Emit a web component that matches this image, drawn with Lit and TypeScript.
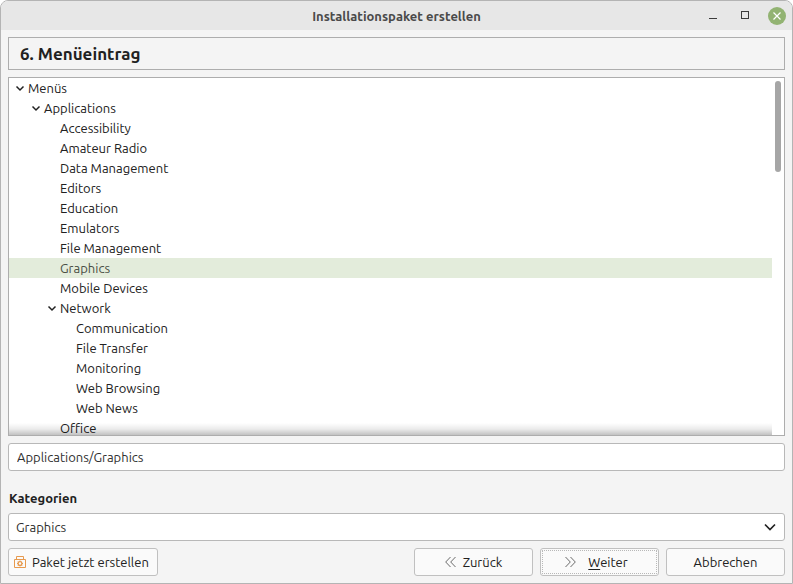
import { LitElement, html, css, svg, nothing } from "lit";
import { customElement, state } from "lit/decorators.js";
import { classMap } from "lit/directives/class-map.js";

interface MenuRow {
  label: string;
  level: number;
  open?: boolean;
}

const ROWS: MenuRow[] = [
  { label: "Menüs", level: 1, open: true },
  { label: "Applications", level: 2, open: true },
  { label: "Accessibility", level: 3 },
  { label: "Amateur Radio", level: 3 },
  { label: "Data Management", level: 3 },
  { label: "Editors", level: 3 },
  { label: "Education", level: 3 },
  { label: "Emulators", level: 3 },
  { label: "File Management", level: 3 },
  { label: "Graphics", level: 3 },
  { label: "Mobile Devices", level: 3 },
  { label: "Network", level: 3, open: true },
  { label: "Communication", level: 4 },
  { label: "File Transfer", level: 4 },
  { label: "Monitoring", level: 4 },
  { label: "Web Browsing", level: 4 },
  { label: "Web News", level: 4 },
  { label: "Office", level: 3 },
];

const chevron = svg`<path d="M1.5 3.5 L5 7 L8.5 3.5" fill="none" stroke="currentColor" stroke-width="1.5"/>`;

@customElement("app-root")
export class AppRoot extends LitElement {
  @state() private selected = "Graphics";

  static styles = css`
    :host {
      display: block;
      font-family: "Ubuntu", "Noto Sans", sans-serif;
      font-size: 13px;
      line-height: 20px;
      color: #212121;
    }
    * {
      box-sizing: border-box;
    }
    .window {
      display: flex;
      flex-direction: column;
      height: 100vh;
      min-height: 400px;
      border: 1px solid #b4b4b4;
      border-radius: 8px 8px 0 0;
      background: #f4f4f4;
      overflow: hidden;
    }
    .titlebar {
      display: grid;
      grid-template-columns: 1fr auto 1fr;
      align-items: center;
      flex: none;
      height: 29px;
      padding: 0 6px;
      background: #e7e7e7;
    }
    .title {
      grid-column: 2;
      margin: 0;
      font-size: 13px;
      line-height: 18px;
      font-weight: 600;
      color: #4a4a4a;
    }
    .controls {
      display: flex;
      justify-content: flex-end;
      align-items: center;
      gap: 14px;
    }
    .control {
      display: block;
      width: 18px;
      height: 18px;
      padding: 0;
      border: 0;
      background: none;
      color: #3c3c3c;
    }
    .control svg {
      display: block;
    }
    .body {
      display: flex;
      flex-direction: column;
      flex: 1;
      min-height: 0;
      padding: 7px;
    }
    .heading {
      flex: none;
      margin: 0 0 7px;
      padding: 0 11px;
      border: 1px solid #adadad;
      font-size: 17px;
      line-height: 31px;
      font-weight: 700;
    }
    .panel {
      position: relative;
      display: grid;
      grid-template-columns: 1fr 12px;
      flex: 1;
      min-height: 0;
      border: 1px solid #adadad;
      background: #fff;
    }
    .tree {
      margin: 0;
      padding: 0;
      list-style: none;
      overflow-y: auto;
      scrollbar-width: none;
    }
    .row {
      display: flex;
      align-items: center;
      height: 20px;
      cursor: default;
    }
    .level1 { padding-left: 6px; }
    .level2 { padding-left: 22px; }
    .level3 { padding-left: 38px; }
    .level4 { padding-left: 54px; }
    .arrow {
      flex: none;
      width: 13px;
      height: 10px;
    }
    .arrow svg {
      display: block;
    }
    .selected {
      background: #e3ecdb;
      color: #4a4f45;
    }
    .track {
      padding: 3px;
    }
    .thumb {
      width: 6px;
      height: 26%;
      border-radius: 3px;
      background: #a6a6a6;
    }
    .fade {
      position: absolute;
      left: 0;
      right: 12px;
      bottom: 0;
      height: 12px;
      background: linear-gradient(rgba(0, 0, 0, 0), rgba(0, 0, 0, 0.08) 50%, rgba(0, 0, 0, 0.24));
      pointer-events: none;
    }
    .field {
      flex: none;
      width: 100%;
      height: 28px;
      border: 1px solid #b8b8b8;
      border-radius: 3px;
      background: #fff;
      color: #303030;
      font: inherit;
    }
    .path {
      margin: 7px 0 17px;
      padding: 0 8px;
    }
    .label {
      flex: none;
      margin-bottom: 5px;
      padding-left: 1px;
      font-weight: 700;
    }
    .picker {
      position: relative;
      flex: none;
    }
    .select {
      display: block;
      padding: 0 30px 0 7px;
      appearance: none;
    }
    .caret {
      position: absolute;
      top: 8px;
      right: 9px;
      pointer-events: none;
    }
    .caret svg {
      display: block;
    }
    .actions {
      display: flex;
      flex: none;
      gap: 7px;
      margin-top: 7px;
    }
    .button {
      display: flex;
      align-items: center;
      justify-content: center;
      gap: 7px;
      width: 119px;
      height: 28px;
      padding: 0;
      border: 1px solid #c0c0c0;
      border-radius: 3px;
      background: #fafafa;
      color: #212121;
      font: inherit;
    }
    .button svg {
      display: block;
      flex: none;
    }
    .create {
      justify-content: flex-start;
      gap: 5px;
      width: 150px;
      margin-right: auto;
      padding: 0 4px;
    }
    .default {
      gap: 12px;
      padding-right: 6px;
      outline: 1px dotted #b8b8b8;
      outline-offset: -3px;
    }
    .mnemonic {
      text-decoration: underline;
      text-underline-offset: 2px;
    }
  `;

  private renderRow(row: MenuRow) {
    const chosen = row.label === this.selected;
    return html`<li
      class=${classMap({ row: true, ["level" + row.level]: true, selected: chosen })}
      role="treeitem"
      aria-level=${row.level}
      aria-selected=${chosen}
      aria-expanded=${row.open ? "true" : nothing}
      @click=${() => (this.selected = row.label)}
    ><span class="arrow">${row.open
        ? html`<svg width="10" height="10" viewBox="0 0 10 10">${chevron}</svg>`
        : nothing}</span>${row.label}</li>`;
  }

  render() {
    return html`
      <div class="window">
        <header class="titlebar">
          <h1 class="title">Installationspaket erstellen</h1>
          <div class="controls">
            <button class="control" aria-label="Minimieren">
              <svg width="18" height="18"><path d="M5 11.5H13" stroke="currentColor" /></svg>
            </button>
            <button class="control" aria-label="Maximieren">
              <svg width="18" height="18"><rect x="5.5" y="4.5" width="7" height="7" fill="none" stroke="currentColor" /></svg>
            </button>
            <button class="control" aria-label="Schließen">
              <svg width="18" height="18">
                <circle cx="9" cy="9" r="9" fill="#92b372" />
                <path d="M5.5 5.5L12.5 12.5M12.5 5.5L5.5 12.5" stroke="#fff" stroke-width="1.2" />
              </svg>
            </button>
          </div>
        </header>
        <main class="body">
          <h2 class="heading">6. Menüeintrag</h2>
          <div class="panel">
            <ul class="tree" role="tree" aria-label="Menüs">${ROWS.map((row) => this.renderRow(row))}</ul>
            <div class="track"><div class="thumb"></div></div>
            <div class="fade"></div>
          </div>
          <input class="field path" type="text" aria-label="Menüpfad" .value=${"Applications/Graphics"} />
          <label class="label" for="category">Kategorien</label>
          <div class="picker">
            <select class="field select" id="category"><option>Graphics</option></select>
            <span class="caret"><svg width="12" height="12" viewBox="0 0 12 12"><path d="M1 3.5L6 8.5L11 3.5" fill="none" stroke="#212121" stroke-width="1.7" /></svg></span>
          </div>
          <div class="actions">
            <button class="button create">
              <svg width="14" height="14" viewBox="0 0 14 14" fill="none" stroke="#e79a4e">
                <path d="M3.5 4V1.5H10.5V4M1.5 4.5H12.5V12.5H1.5Z" />
                <circle cx="7" cy="8.5" r="1.9" stroke-width="1.3" />
                <path d="M7 5.5V6.5M7 10.5V11.5M4 8.5H5M9 8.5H10M5 6.5L5.6 7.1M9 6.5L8.4 7.1M5 10.5L5.6 9.9M9 10.5L8.4 9.9" />
              </svg>
              Paket jetzt erstellen
            </button>
            <button class="button">
              <svg width="11" height="12" viewBox="0 0 11 12" fill="none" stroke="#6a6a6a"><path d="M5.5 1L0.7 6L5.5 11M10.5 1L5.7 6L10.5 11" /></svg>
              Zurück
            </button>
            <button class="button default">
              <svg width="11" height="12" viewBox="0 0 11 12" fill="none" stroke="#6a6a6a"><path d="M0.5 1L5.3 6L0.5 11M5.5 1L10.3 6L5.5 11" /></svg>
              <span><span class="mnemonic">W</span>eiter</span>
            </button>
            <button class="button">Abbrechen</button>
          </div>
        </main>
      </div>
    `;
  }
}
